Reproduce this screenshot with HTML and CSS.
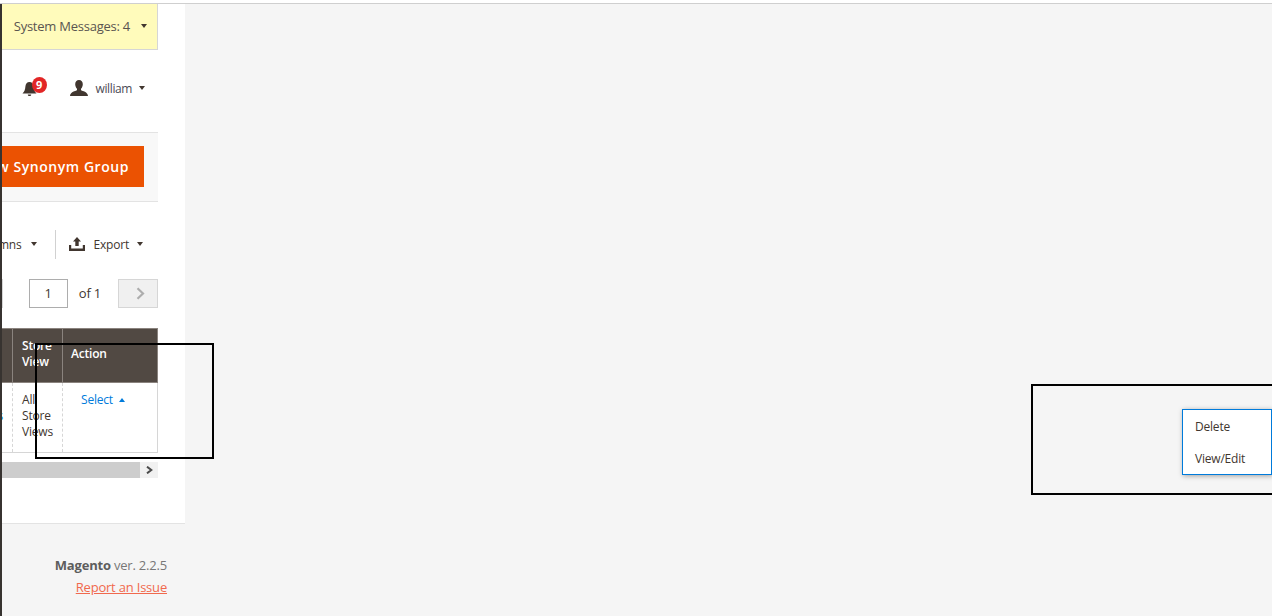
FILE: index.html
```html
<!DOCTYPE html>
<html lang="en">
<head>
    <meta charset="UTF-8">
    <title>Search Synonyms</title>
    <link rel="stylesheet" href="styles.css">
</head>
<body>
    <div class="page">
        <div class="content">
            <!-- System messages -->
            <div class="messages">
                <span>System Messages: 4</span>
                <i class="caret caret-msg"></i>
            </div>

            <!-- Admin user row -->
            <div class="user-row">
                <div class="bell">
                    <svg width="15" height="16" viewBox="0 0 15 16"><path fill="#41362f" d="M7.500 1C5 1 3.600 3 3.400 5.500 3.200 8.500 2.500 10.500 .5 12.500h14c-2-2-2.700-4-2.900-7C11.400 3 10 1 7.500 1z"/><path fill="#41362f" d="M5.800 13.500h3.400c0 1-.7 1.500-1.700 1.500s-1.700-.5-1.700-1.500z"/></svg>
                    <span class="badge">9</span>
                </div>
                <svg class="user-icon" width="18" height="16" viewBox="0 0 18 16"><path fill="#41362f" d="M9 0c2.400 0 3.800 1.800 3.800 4.200 0 1.800-.8 3.500-1.800 4.500v1.500c1.500 1 6.700 1.300 7 5.800H0c.3-4.500 5.500-4.800 7-5.800V8.700C6 7.700 5.200 6 5.200 4.200 5.200 1.800 6.600 0 9 0z"/></svg>
                <span class="username">william</span>
                <i class="caret caret-small"></i>
            </div>

            <!-- Page actions -->
            <div class="actions">
                <button class="primary">Add New Synonym Group</button>
            </div>

            <!-- Grid toolbar -->
            <div class="toolbar">
                <span class="tool">Columns</span>
                <i class="caret caret-tool"></i>
                <span class="divider"></span>
                <svg class="export-icon" width="16" height="14" viewBox="0 0 16 14"><path fill="#41362f" d="M8 0l4 4.500H9.700V9H6.300V4.500H4zM0 8h2.200v3.500h11.600V8H16v6H0z"/></svg>
                <span class="tool">Export</span>
                <i class="caret caret-export"></i>
            </div>

            <!-- Pager -->
            <div class="pager">
                <span class="per-page"></span>
                <input class="page-input" type="text" value="1">
                <span class="page-total">of 1</span>
                <span class="page-next">
                    <svg width="9" height="13" viewBox="0 0 9 13"><path fill="none" stroke="#adadad" stroke-width="2.200" d="M1.500 1.200L7 6.500l-5.500 5.300"/></svg>
                </span>
            </div>

            <!-- Grid -->
            <div class="grid-wrap">
                <table class="grid">
                    <thead>
                        <tr>
                            <th class="col-website">Website</th>
                            <th class="col-store">Store View</th>
                            <th class="col-action">Action</th>
                        </tr>
                    </thead>
                    <tbody>
                        <tr>
                            <td class="col-website"><a class="select" href="#">All<br>Websites</a></td>
                            <td class="col-store">All Store Views</td>
                            <td class="col-action"><a class="select" href="#">Select<i class="caret-up"></i></a></td>
                        </tr>
                    </tbody>
                </table>
            </div>

            <!-- Horizontal scrollbar -->
            <div class="scrollbar">
                <div class="scroll-thumb"></div>
                <div class="scroll-btn">
                    <svg width="7" height="8" viewBox="0 0 7 8"><path fill="none" stroke="#4a4a4a" stroke-width="2" d="M1 .7L5.300 4 1 7.300"/></svg>
                </div>
            </div>
        </div>

        <footer class="footer">
            <div class="version"><strong>Magento</strong> ver. 2.2.5</div>
            <a class="report" href="#">Report an Issue</a>
        </footer>
    </div>

    <!-- Annotation boxes and the open action menu -->
    <div class="mark mark-select"></div>
    <div class="mark mark-menu"></div>
    <ul class="menu">
        <li>Delete</li>
        <li>View/Edit</li>
    </ul>
</body>
</html>
```

FILE: styles.css
```css
/* Base */
html {
    background-color: #fff;
}
html, body {
    margin: 0;
    height: 616px;
    overflow: hidden;
}
body {
    font-family: "Open Sans", sans-serif;
    font-size: 12px;
    letter-spacing: -.2px;
    color: #41362f;
    background-color: #f5f5f5;
    border-top: 1px solid #cfcfcf;
    margin-top: 3px;
    position: relative;
}
.page {
    width: 183px;
    height: 612px;
    border-left: 2px solid #373330;
    display: flex;
    flex-direction: column;
    overflow: hidden;
}
.content {
    background-color: #fff;
    height: 520px;
    padding-right: 27px;
    border-bottom: 1px solid #e3e3e3;
    box-sizing: border-box;
    flex: none;
}

/* Carets */
.caret {
    display: inline-block;
    flex: none;
    width: 0;
    height: 0;
    border-left: 3.500px solid transparent;
    border-right: 3.500px solid transparent;
    border-top: 4px solid #41362f;
}

/* System messages */
.messages {
    height: 46px;
    background-color: #fffbbb;
    border: 1px solid #d6d6d6;
    border-width: 0 1px 1px 0;
    box-sizing: border-box;
    display: flex;
    align-items: center;
    justify-content: flex-end;
    font-size: 13px;
    letter-spacing: -.24px;
    white-space: nowrap;
    color: #5a5550;
    padding-right: 10px;
    padding-bottom: 2px;
}
.caret-msg {
    margin-left: 11px;
}

/* User row */
.user-row {
    height: 82px;
    display: flex;
    align-items: center;
    justify-content: flex-end;
    padding-right: 13px;
    padding-bottom: 6px;
    box-sizing: border-box;
    font-size: 12px;
    letter-spacing: -.4px;
}
.bell {
    position: relative;
    width: 15px;
    height: 16px;
    margin-right: 33px;
    margin-top: 2px;
}
.badge {
    position: absolute;
    top: -4px;
    left: 10px;
    width: 15px;
    height: 16px;
    border-radius: 50%;
    background-color: #e22626;
    color: #fff;
    font-size: 11px;
    font-weight: 700;
    line-height: 16px;
    text-align: center;
    letter-spacing: 0;
}
.user-icon {
    margin-right: 8px;
}
.username {
    color: #4b4b55;
}
.caret-small {
    margin-left: 7px;
}

/* Page actions */
.actions {
    height: 70px;
    background-color: #f8f8f8;
    border-top: 1px solid #e3e3e3;
    border-bottom: 1px solid #e3e3e3;
    box-sizing: border-box;
    display: flex;
    align-items: center;
    justify-content: flex-end;
    padding-right: 14px;
    padding-bottom: 2px;
}
.primary {
    flex: none;
    height: 41px;
    padding: 0 15px;
    background-color: #eb5202;
    border: none;
    color: #fff;
    font-family: "Open Sans", sans-serif;
    font-size: 14px;
    font-weight: 600;
    letter-spacing: .55px;
    white-space: nowrap;
}

/* Toolbar */
.toolbar {
    height: 84px;
    display: flex;
    align-items: center;
    justify-content: flex-end;
    padding-right: 15px;
    box-sizing: border-box;
    white-space: nowrap;
}
.caret-tool {
    margin-left: 9px;
    margin-right: 18px;
}
.divider {
    flex: none;
    width: 1px;
    height: 29px;
    background-color: #d1d1d1;
    margin-right: 13px;
}
.export-icon {
    flex: none;
    margin-right: 9px;
}
.caret-export {
    margin-left: 8px;
}

/* Pager */
.pager {
    height: 30px;
    margin-top: -8px;
    display: flex;
    align-items: center;
    justify-content: flex-end;
}
.per-page {
    flex: none;
    width: 40px;
    height: 29px;
    box-sizing: border-box;
    border: 1px solid #d6d6d6;
    margin-right: 26px;
}
.page-input {
    flex: none;
    width: 39px;
    height: 29px;
    box-sizing: border-box;
    border: 1px solid #adadad;
    text-align: center;
    font-family: "Open Sans", sans-serif;
    font-size: 13px;
    color: #41362f;
    padding: 0;
    border-radius: 0;
}
.page-total {
    flex: none;
    margin: 0 17px 0 11px;
    font-size: 13px;
    color: #41362f;
}
.page-next {
    flex: none;
    width: 40px;
    height: 29px;
    box-sizing: border-box;
    border: 1px solid #d6d6d6;
    background-color: #f0f0f0;
    padding-left: 4px;
    display: flex;
    align-items: center;
    justify-content: center;
}

/* Grid */
.grid-wrap {
    margin-top: 20px;
    display: flex;
    justify-content: flex-end;
}
.grid {
    flex: none;
    width: 214px;
    border-collapse: collapse;
    table-layout: fixed;
    font-size: 12px;
}
.grid th {
    background-color: #514943;
    color: #fff;
    font-weight: 600;
    text-align: left;
    height: 54px;
    padding: 0 9px 4px;
    line-height: 16px;
    border: 1px solid #8a837e;
    box-sizing: border-box;
}
.grid th.col-action {
    padding-left: 8px;
    padding-bottom: 3px;
}
.grid td {
    height: 70px;
    padding: 9px 9px 0;
    line-height: 16px;
    vertical-align: top;
    border: 1px solid #d6d6d6;
    border-left-style: dashed;
    border-right-style: dashed;
    box-sizing: border-box;
}
.col-website {
    width: 68px;
}
.col-store {
    width: 50px;
}
.grid td.col-action {
    border-right-style: solid;
    padding-left: 18px;
}
.select {
    color: #007bdb;
    text-decoration: none;
    white-space: nowrap;
}
.caret-up {
    display: inline-block;
    width: 0;
    height: 0;
    margin-left: 6px;
    vertical-align: 2px;
    border-left: 3.500px solid transparent;
    border-right: 3.500px solid transparent;
    border-bottom: 4px solid #007bdb;
}

/* Scrollbar */
.scrollbar {
    height: 16px;
    margin-top: 9px;
    display: flex;
}
.scroll-thumb {
    flex: 1;
    background-color: #cdcdcd;
}
.scroll-btn {
    width: 18px;
    background-color: #f1f1f1;
    display: flex;
    align-items: center;
    justify-content: center;
}

/* Footer */
.footer {
    padding: 30px 18px 0 0;
    text-align: right;
    font-size: 13px;
    line-height: 22px;
    color: #777;
}
.version strong {
    color: #5d5d5d;
}
.report {
    color: #f1694d;
    text-decoration: underline;
}

/* Overlays */
.mark {
    position: absolute;
    border: 2px solid #000;
    box-sizing: border-box;
}
.mark-select {
    left: 35px;
    top: 339px;
    width: 179px;
    height: 116px;
}
.mark-menu {
    left: 1031px;
    top: 380px;
    width: 245px;
    height: 111px;
}
.menu {
    position: absolute;
    left: 1182px;
    top: 405px;
    width: 90px;
    height: 66px;
    box-sizing: border-box;
    margin: 0;
    padding: 0;
    list-style: none;
    background-color: #fff;
    border: 1px solid #007bdb;
    box-shadow: 1px 1px 5px rgba(0,0,0,.35);
    font-size: 12px;
    color: #41362f;
}
.menu li {
    height: 32px;
    line-height: 34px;
    padding-left: 12px;
    white-space: nowrap;
}
```
